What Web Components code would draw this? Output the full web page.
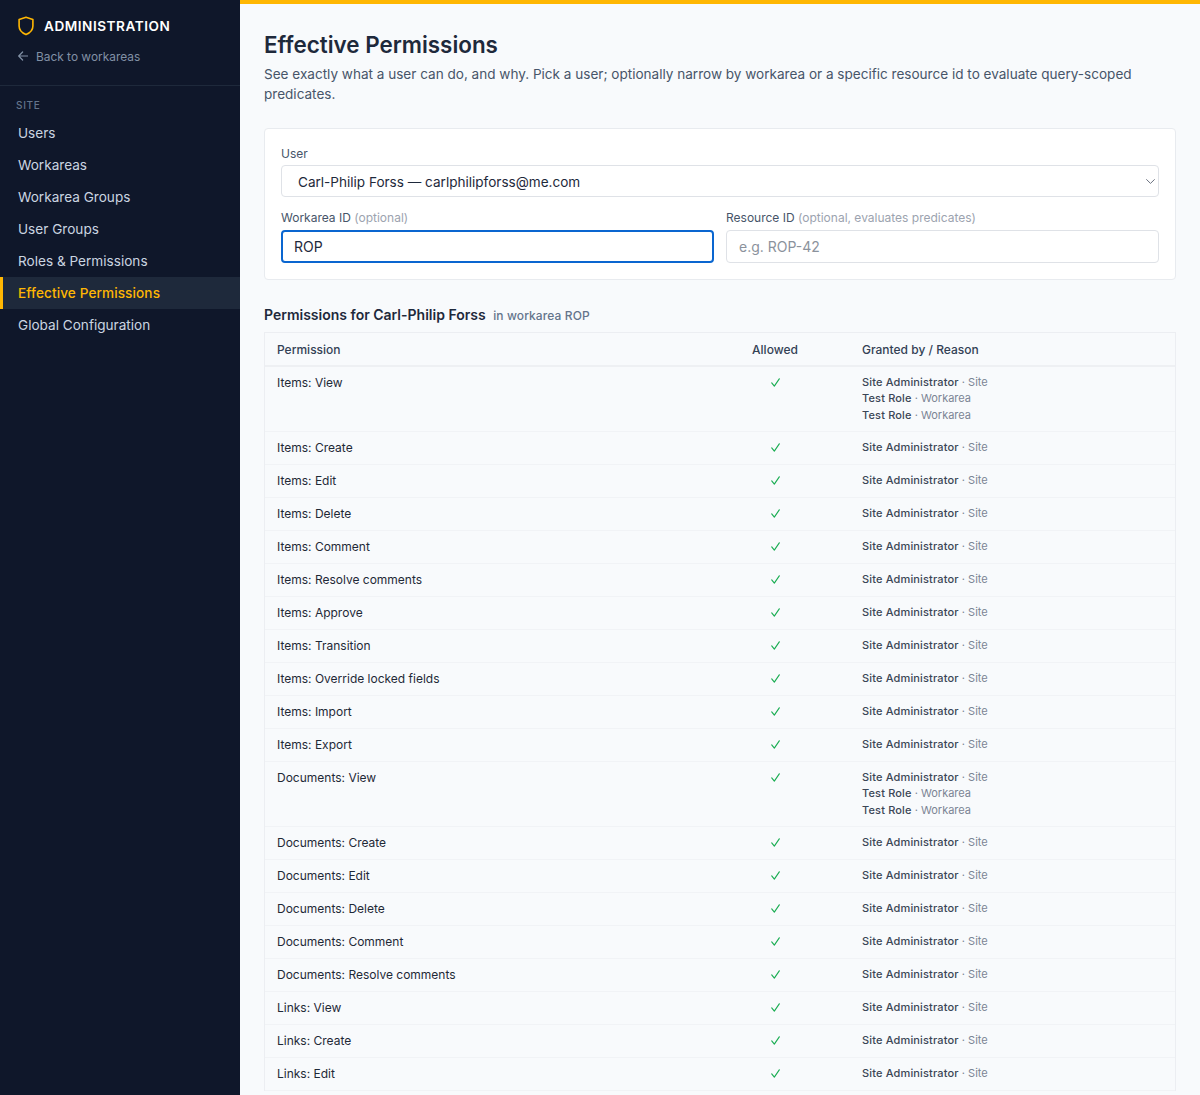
<!DOCTYPE html>
<html>
<head>
<meta charset="utf-8">
<title>Effective Permissions</title>
<style>
    html, body { margin: 0; height: 100%; overflow: hidden; background: #f8fafc; }
    body { font-family: Inter, "Liberation Sans", sans-serif; }
</style>
</head>
<body>
<admin-layout>
    <admin-sidebar slot="side"></admin-sidebar>
    <effective-permissions></effective-permissions>
</admin-layout>

<script>
class adminLayout extends HTMLElement {
    constructor() {
        super()
        this.attachShadow({ mode: "open" })
        this.shadowRoot.innerHTML = `
        <style>
            :host { display: flex; height: 100vh; overflow: hidden; }
            .side { flex: 0 0 240px; display: block; }
            main { flex: 1; min-width: 0; border-top: 4px solid #ffb703; padding: 0 24px; overflow: hidden; }
        </style>
        <div class="side"><slot name="side"></slot></div>
        <main><slot></slot></main>
        `
    }
}

class adminSidebar extends HTMLElement {
    constructor() {
        super()
        this.attachShadow({ mode: "open" })
        const links = ["Users", "Workareas", "Workarea Groups", "User Groups", "Roles & Permissions", "Effective Permissions", "Global Configuration"]
        this.shadowRoot.innerHTML = `
        <style>
            * { box-sizing: border-box; }
            :host { display: block; height: 100%; background: #0f172a; }
            header { height: 86px; padding: 16px 16px 0 18px; border-bottom: 1px solid #1e293b; }
            .brand { display: flex; align-items: center; gap: 10px; height: 20px; color: #fff; font-size: 13.6px; font-weight: 600; letter-spacing: .52px; }
            .back { display: flex; align-items: center; gap: 8px; margin-top: 11px; height: 18px; color: #8190a5; font-size: 11.9px; }
            .title { padding: 13px 16px 0; height: 31px; font-size: 10px; font-weight: 500; letter-spacing: .7px; color: #64748b; line-height: 12px; }
            a { display: block; height: 32px; line-height: 32px; padding-left: 15px; border-left: 3px solid transparent; color: #cbd5e1; font-size: 13.6px; }
            a.active { background: #1e293b; border-left-color: #ffb703; color: #ffb703; font-weight: 500; letter-spacing: .1px; }
            svg { display: block; flex: none; }
        </style>
        <header>
            <div class="brand">
                <svg width="16" height="20" viewBox="0 0 16 20" fill="none" stroke="#ffb703" stroke-width="1.6" stroke-linejoin="round"><path d="M8 1.3 14.9 3.6V10C14.9 14 12 16.9 8 18.6 4 16.9 1.1 14 1.1 10V3.6Z"/></svg>
                <span>ADMINISTRATION</span>
            </div>
            <div class="back">
                <svg width="10" height="10" viewBox="0 0 10 10" fill="none" stroke="#8190a5" stroke-width="1.2" stroke-linecap="round" stroke-linejoin="round"><path d="M9.5 5H.7M4.6 1 .7 5 4.6 9"/></svg>
                <span>Back to workareas</span>
            </div>
        </header>
        <div class="title">SITE</div>
        <nav>
            ${links.map(l => `<a class="${l == "Effective Permissions" ? "active" : ""}">${l.replace("&", "&amp;")}</a>`).join("")}
        </nav>
        `
    }
}

class formField extends HTMLElement {
    constructor() {
        super()
        this.attachShadow({ mode: "open" })
    }

    connectedCallback() {
        const hint = this.getAttribute("hint")
        const placeholder = this.getAttribute("placeholder")
        const value = this.getAttribute("value")
        const chevron = this.hasAttribute("select")
            ? `<svg viewBox="0 0 9 5" width="9" height="5" fill="none" stroke="#6b7280" stroke-width="1" stroke-linecap="round" stroke-linejoin="round"><path d="M.6.6 4.5 4.4 8.4.6"/></svg>`
            : ""
        this.shadowRoot.innerHTML = `
        <style>
            * { box-sizing: border-box; }
            :host { display: block; min-width: 0; }
            label { display: block; height: 16px; margin-bottom: 4px; font-size: 12px; line-height: 16px; color: #475569; }
            :host([select]) label { padding-top: 1px; }
            label span { color: #9ca3af; }
            .box { position: relative; display: flex; align-items: center; height: 33px; padding: 0 12px; background: #fff; border: 1px solid #dfe2e7; border-radius: 4px; font-size: 14px; color: #1e293b; }
            :host([select]) .box { height: 32px; padding: 1px 0 0 16px; font-size: 13.55px; }
            :host([focused]) .box { border: 2px solid #0a66d0; padding-left: 11px; }
            .ph { color: #8b929c; }
            svg { position: absolute; right: 3px; top: 13px; }
        </style>
        <label>${this.getAttribute("label")}${hint ? ` <span>${hint}</span>` : ""}</label>
        <div class="box">
            ${value ? `<span>${value}</span>` : `<span class="ph">${placeholder}</span>`}
            ${chevron}
        </div>
        `
    }
}

class permRow extends HTMLElement {
    constructor() {
        super()
        this.attachShadow({ mode: "open" })
    }

    connectedCallback() {
        const grants = JSON.parse(this.getAttribute("grants"))
        this.shadowRoot.innerHTML = `
        <style>
            * { box-sizing: border-box; }
            :host { display: grid; grid-template-columns: 435px 150px 1fr; border-bottom: 1px solid #f1f3f6; font-size: 12px; color: #1f2937; }
            div { padding: 8px 12px 7.5px; line-height: 16.5px; }
            .ok { display: flex; justify-content: center; padding-top: 11px; }
            .ok svg { display: block; }
            .g { padding-top: 6.9px; padding-bottom: 7.6px; color: #374151; font-size: 11px; }
            .g p { margin: 0; height: 16.5px; white-space: nowrap; }
            .g b { font-weight: 500; color: #3b4656; letter-spacing: .15px; }
            .g span { color: #7b8494; }
        </style>
        <div>${this.getAttribute("name")}</div>
        <div class="ok"><svg width="9" height="9" viewBox="0 0 10 10" fill="none" stroke="#1aad52" stroke-width="1.25" stroke-linecap="round" stroke-linejoin="round"><path d="M.8 5.4 3.7 9 9.2.9"/></svg></div>
        <div class="g">${grants.map(g => `<p><b>${g[0]}</b><span> · ${g[1]}</span></p>`).join("")}</div>
        `
    }
}

class effectivePermissions extends HTMLElement {
    constructor() {
        super()
        this.attachShadow({ mode: "open" })
        const admin = ["Site Administrator", "Site"]
        const test = ["Test Role", "Workarea"]
        const names = [
            "Items: View", "Items: Create", "Items: Edit", "Items: Delete", "Items: Comment", "Items: Resolve comments",
            "Items: Approve", "Items: Transition", "Items: Override locked fields", "Items: Import", "Items: Export",
            "Documents: View", "Documents: Create", "Documents: Edit", "Documents: Delete", "Documents: Comment",
            "Documents: Resolve comments", "Links: View", "Links: Create", "Links: Edit"
        ]
        const rows = names.map(n => {
            const grants = n.endsWith(": View") && !n.startsWith("Links") ? [admin, test, test] : [admin]
            return `<perm-row name="${n}" grants='${JSON.stringify(grants)}'></perm-row>`
        }).join("")
        this.shadowRoot.innerHTML = `
        <style>
            * { box-sizing: border-box; }
            :host { display: block; padding-top: 26px; }
            h1 { margin: 0; font-size: 22.4px; line-height: 30px; font-weight: 600; color: #1e293b; }
            .lead { margin: 4px 0 24px; font-size: 13.55px; line-height: 20px; color: #475569; }
            .card { display: grid; grid-template-columns: 1fr 1fr; gap: 13px 12px; padding: 16px; background: #fff; border: 1px solid #e8ebef; border-radius: 4px; }
            .wide { grid-column: 1 / -1; }
            h2 { margin: 26px 0 7px; font-size: 14px; line-height: 18px; font-weight: 600; color: #1e293b; }
            h2 small { margin-left: 4px; font-size: 12px; font-weight: 500; color: #64748b; letter-spacing: .1px; }
            .table { border: 1px solid #eceef2; border-bottom: 0; }
            .head { display: grid; grid-template-columns: 435px 150px 1fr; height: 34px; line-height: 33px; border-bottom: 2px solid #eef0f3; font-size: 12px; font-weight: 500; color: #334155; }
            .head div { padding: 0 12px; }
            .head .c { text-align: center; }
        </style>
        <h1>Effective Permissions</h1>
        <p class="lead">See exactly what a user can do, and why. Pick a user; optionally narrow by workarea or a specific resource id to evaluate query-scoped predicates.</p>
        <section class="card">
            <form-field class="wide" select label="User" value="Carl-Philip Forss — carlphilipforss@me.com"></form-field>
            <form-field focused label="Workarea ID" hint="(optional)" value="ROP"></form-field>
            <form-field label="Resource ID" hint="(optional, evaluates predicates)" placeholder="e.g. ROP-42"></form-field>
        </section>
        <h2>Permissions for Carl-Philip Forss <small>in workarea ROP</small></h2>
        <div class="table">
            <div class="head"><div>Permission</div><div class="c">Allowed</div><div>Granted by / Reason</div></div>
            ${rows}
        </div>
        `
    }
}

customElements.define("admin-layout", adminLayout)
customElements.define("admin-sidebar", adminSidebar)
customElements.define("form-field", formField)
customElements.define("perm-row", permRow)
customElements.define("effective-permissions", effectivePermissions)
</script>
</body>
</html>
